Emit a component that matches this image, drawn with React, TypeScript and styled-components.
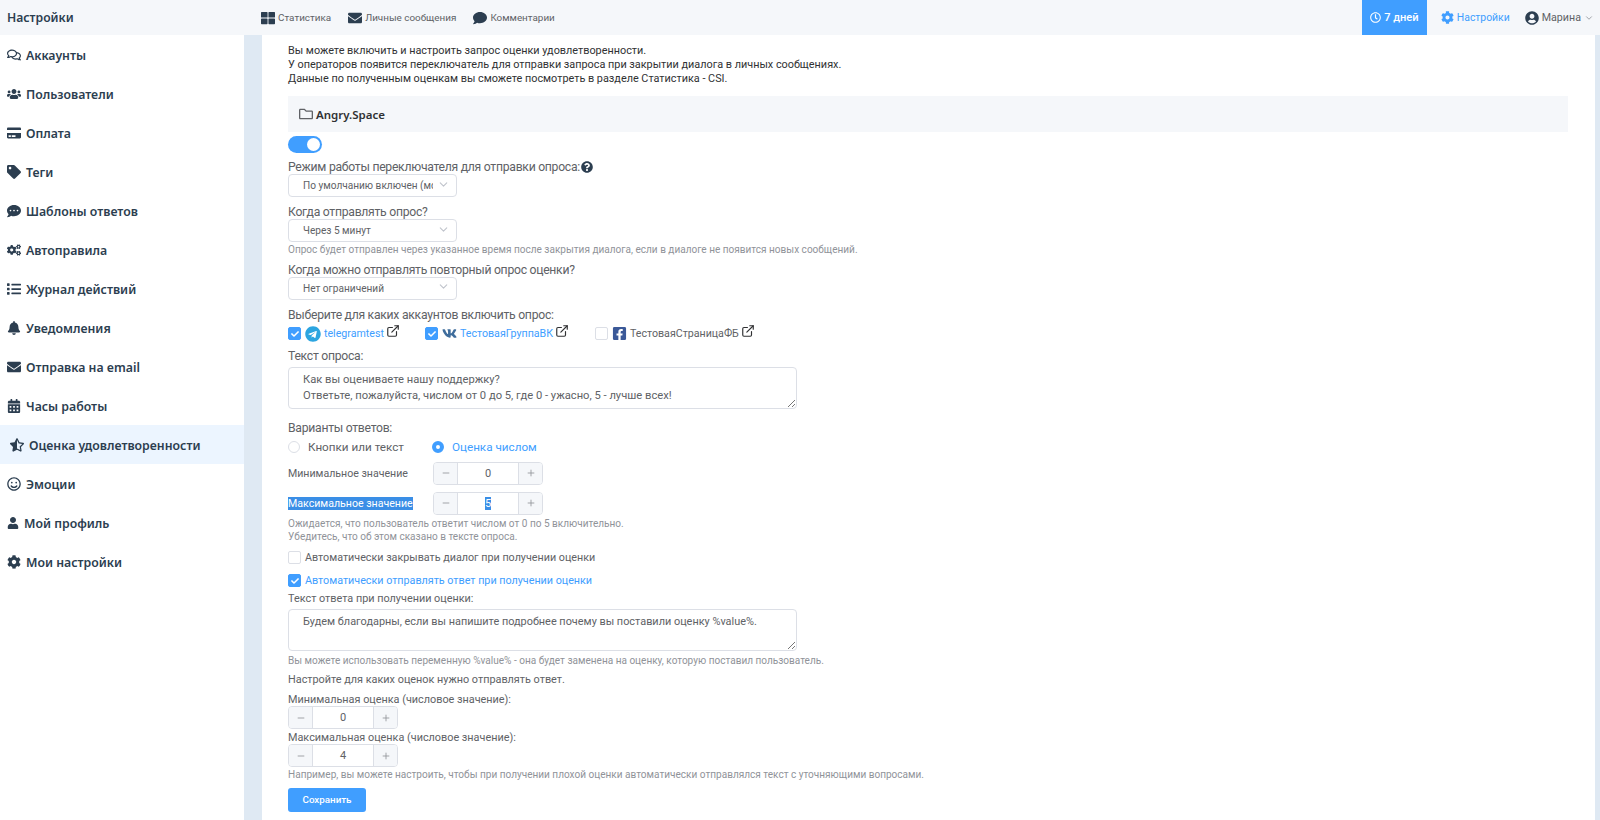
import React from "react";
import styled, { createGlobalStyle } from "styled-components";
import {
  FaRegComments, FaUsers, FaCreditCard, FaTag, FaCommentDots, FaCogs, FaList, FaBell, FaEnvelope,
  FaCalendarAlt, FaStarHalfAlt, FaRegSmile, FaUser, FaCog, FaThLarge, FaComment, FaRegClock,
  FaUserCircle, FaRegFolder, FaQuestionCircle, FaTelegram, FaVk, FaFacebookSquare, FaCheck,
} from "react-icons/fa";
import { FiChevronDown, FiExternalLink, FiMinus, FiPlus } from "react-icons/fi";

const GlobalStyle = createGlobalStyle`
  html, body { margin: 0; height: 100%; overflow: hidden; background: #fff; }
  body { font-family: Roboto, "Noto Sans", sans-serif; font-size: 12px; color: #606266; }
  *, *::before, *::after { box-sizing: border-box; }
`;

const BLUE = "#409eff";

const Page = styled.div`
  width: 1600px;
  height: 820px;
  display: flex;
  flex-direction: column;
  overflow: hidden;
`;

// верхняя панель
const TopBar = styled.header`
  height: 35px;
  flex: none;
  display: flex;
  background: #f5f7fa;
`;
const BrandTitle = styled.div`
  width: 244px;
  padding-left: 7px;
  font-family: "Noto Sans", sans-serif;
  font-size: 12.2px;
  font-weight: 600;
  line-height: 35px;
  color: #2c3e50;
`;
const TopNav = styled.nav`
  flex: 1;
  display: flex;
  align-items: center;
  padding-left: 17px;
  gap: 17px;
`;
const TopLink = styled.a`
  display: flex;
  align-items: center;
  gap: 3px;
  font-size: 9.9px;
  color: #606266;
  svg { width: auto; height: 14px; color: #2c3e50; }
`;
const TrialBadge = styled.div`
  width: 65px;
  background: ${BLUE};
  color: #fff;
  font-weight: 500;
  font-size: 11px;
  display: flex;
  align-items: center;
  justify-content: center;
  gap: 3px;
  svg { width: 11px; height: 11px; }
`;
const TopSettings = styled.a`
  margin-left: 14px;
  display: flex;
  align-items: center;
  gap: 3px;
  font-size: 10.4px;
  color: ${BLUE};
  svg { width: 13px; height: 13px; }
`;
const UserMenu = styled.div`
  margin: 0 6px 0 15px;
  display: flex;
  align-items: center;
  gap: 3px;
  font-size: 10.7px;
  color: #606266;
  svg { color: #2c3e50; width: 14px; height: 14px; }
  svg:last-child { color: #909399; width: 10px; height: 10px; margin-left: 0; }
`;

const Body = styled.div`
  flex: 1;
  display: flex;
  min-height: 0;
  background: #dfe9f3;
`;

// левое меню
const Sidebar = styled.aside`
  width: 244px;
  flex: none;
  background: #fff;
`;
const MenuItem = styled.a<{ $active?: boolean }>`
  height: 39px;
  padding-top: 1px;
  display: flex;
  align-items: center;
  gap: 5px;
  padding-left: ${(p) => (p.$active ? "10px" : "7px")};
  font-family: "Noto Sans", sans-serif;
  font-size: 12.3px;
  font-weight: 600;
  color: #2c3e50;
  background: ${(p) => (p.$active ? "#ecf5ff" : "transparent")};
  svg { width: auto; height: 14px; flex: none; }
`;
const ProfileIcon = styled(FaUser)`
  && { height: 12px; }
`;

// контент
const Main = styled.main`
  flex: 1;
  margin: 0 5px 0 18px;
  padding: 9px 27px 0 26px;
  background: #fff;
`;
const Intro = styled.p`
  margin: 0;
  font-size: 10.85px;
  line-height: 14px;
  color: #303133;
`;
const FolderBar = styled.div`
  height: 36px;
  margin-top: 10px;
  padding-left: 11px;
  background: #f5f7fa;
  display: flex;
  align-items: center;
  gap: 3px;
  font-family: "Noto Sans", sans-serif;
  font-weight: 600;
  font-size: 11.5px;
  color: #303133;
  svg { width: 14px; height: 14px; color: #606266; }
`;
const Toggle = styled.div`
  width: 34px;
  height: 17px;
  margin-top: 4px;
  padding: 2px;
  border-radius: 9px;
  background: ${BLUE};
  display: flex;
  justify-content: flex-end;
  &::after {
    content: "";
    width: 13px;
    height: 13px;
    border-radius: 50%;
    background: #fff;
  }
`;
const Label = styled.div<{ $top: number; $tight?: boolean }>`
  margin-top: ${(p) => p.$top}px;
  font-size: 12.2px;
  letter-spacing: -0.27px;
  line-height: ${(p) => (p.$tight ? 13 : 14)}px;
  color: #606266;
  display: flex;
  align-items: center;
  gap: 1px;
  svg { width: 12px; height: 12px; color: #2c3e50; }
`;
const SmallLabel = styled(Label)`
  font-size: 10.85px;
  letter-spacing: 0;
`;
const SelectBox = styled.div`
  width: 169px;
  height: 23px;
  padding: 0 6px 0 14px;
  border: 1px solid #dcdfe6;
  border-radius: 4px;
  display: flex;
  align-items: center;
  justify-content: space-between;
  font-size: 10.1px;
  color: #606266;
  svg { width: 13px; height: 13px; color: #c0c4cc; flex: none; margin-top: -3px; }
`;
const SelectText = styled.span`
  width: 130px;
  overflow: hidden;
  white-space: nowrap;
`;
const Hint = styled.div<{ $top: number }>`
  margin-top: ${(p) => p.$top}px;
  font-size: 10.05px;
  line-height: 13.5px;
  color: #909399;
`;
const AccountRow = styled.div`
  margin-top: 3px;
  height: 18px;
  display: flex;
  align-items: center;
`;
const Account = styled.div<{ $on?: boolean; $w: number }>`
  width: ${(p) => p.$w}px;
  display: flex;
  align-items: center;
  gap: 3px;
  font-size: 10.65px;
  color: ${(p) => (p.$on ? BLUE : "#606266")};
`;
const LinkIcon = styled(FiExternalLink)`
  width: 14px;
  height: 14px;
  margin: -5px 0 0 -1px;
  color: #303133;
`;
const Box = styled.span<{ $on?: boolean }>`
  width: 13px;
  height: 13px;
  flex: none;
  margin-right: 1px;
  border-radius: 2px;
  border: 1px solid ${(p) => (p.$on ? BLUE : "#dcdfe6")};
  background: ${(p) => (p.$on ? BLUE : "#fff")};
  display: inline-flex;
  align-items: center;
  justify-content: center;
  svg { width: 8px; height: 8px; color: #fff; }
`;
const TextArea = styled.div<{ $top: number; $h: number; $size: number }>`
  position: relative;
  width: 509px;
  height: ${(p) => p.$h}px;
  margin-top: ${(p) => p.$top}px;
  padding: 4px 14px;
  border: 1px solid #dcdfe6;
  border-radius: 4px;
  font-size: ${(p) => p.$size}px;
  line-height: 16px;
  color: #606266;
`;
const ResizeGrip = styled.svg`
  position: absolute;
  right: 1px;
  bottom: 1px;
  width: 8px;
  height: 8px;
`;
const RadioRow = styled.div`
  margin-top: 3px;
  height: 18px;
  display: flex;
  align-items: center;
`;
const Radio = styled.div<{ $on?: boolean }>`
  display: flex;
  align-items: center;
  gap: 8px;
  margin-right: 28px;
  font-size: 11.7px;
  color: ${(p) => (p.$on ? BLUE : "#606266")};
  &::before {
    content: "";
    width: 12px;
    height: 12px;
    border-radius: 50%;
    border: ${(p) => (p.$on ? `4px solid ${BLUE}` : "1px solid #dcdfe6")};
    background: #fff;
  }
`;
const NumberRow = styled.div<{ $top: number }>`
  margin-top: ${(p) => p.$top}px;
  display: flex;
  align-items: center;
`;
const NumberLabelWrap = styled.div`
  width: 145px;
  font-size: 10.6px;
  color: #606266;
`;
const Selected = styled.span`
  background: #3a8ee6;
  color: #fff;
`;
const Stepper = styled.div`
  width: 110px;
  height: 23px;
  display: flex;
  border: 1px solid #dcdfe6;
  border-radius: 4px;
  font-size: 11px;
  color: #606266;
`;
const StepButton = styled.div`
  width: 24px;
  flex: none;
  background: #f5f7fa;
  display: flex;
  align-items: center;
  justify-content: center;
  &:first-child { border-right: 1px solid #dcdfe6; border-radius: 3px 0 0 3px; }
  &:last-child { border-left: 1px solid #dcdfe6; border-radius: 0 3px 3px 0; }
  svg { width: 10px; height: 10px; color: #909399; }
`;
const StepValue = styled.div`
  flex: 1;
  text-align: center;
  line-height: 21px;
`;
const CheckRow = styled.div<{ $on?: boolean; $top: number }>`
  margin-top: ${(p) => p.$top}px;
  height: 18px;
  display: flex;
  align-items: center;
  gap: 3px;
  font-size: 10.75px;
  color: ${(p) => (p.$on ? BLUE : "#606266")};
`;
const SaveButton = styled.button`
  display: block;
  margin-top: 6px;
  width: 78px;
  height: 24px;
  border: 0;
  border-radius: 3px;
  background: ${BLUE};
  color: #fff;
  font: 500 9.8px Roboto, sans-serif;
`;

const menu = [
  { icon: <FaRegComments />, text: "Аккаунты" },
  { icon: <FaUsers />, text: "Пользователи" },
  { icon: <FaCreditCard />, text: "Оплата" },
  { icon: <FaTag />, text: "Теги" },
  { icon: <FaCommentDots />, text: "Шаблоны ответов" },
  { icon: <FaCogs />, text: "Автоправила" },
  { icon: <FaList />, text: "Журнал действий" },
  { icon: <FaBell />, text: "Уведомления" },
  { icon: <FaEnvelope />, text: "Отправка на email" },
  { icon: <FaCalendarAlt />, text: "Часы работы" },
  { icon: <FaStarHalfAlt />, text: "Оценка удовлетворенности", active: true },
  { icon: <FaRegSmile />, text: "Эмоции" },
  { icon: <ProfileIcon />, text: "Мой профиль" },
  { icon: <FaCog />, text: "Мои настройки" },
];

const Check = ({ on }: { on?: boolean }) => <Box $on={on}>{on && <FaCheck />}</Box>;

const Grip = () => (
  <ResizeGrip viewBox="0 0 8 8">
    <path d="M1 8 L8 1 M5 8 L8 5" stroke="#777" strokeWidth="1" />
  </ResizeGrip>
);

const NumberInput = ({ value, selected }: { value: string; selected?: boolean }) => (
  <Stepper>
    <StepButton><FiMinus /></StepButton>
    <StepValue>{selected ? <Selected>{value}</Selected> : value}</StepValue>
    <StepButton><FiPlus /></StepButton>
  </Stepper>
);

const App = () => {
  return (
    <Page>
      <GlobalStyle />
      <TopBar>
        <BrandTitle>Настройки</BrandTitle>
        <TopNav>
          <TopLink><FaThLarge />Статистика</TopLink>
          <TopLink><FaEnvelope />Личные сообщения</TopLink>
          <TopLink><FaComment />Комментарии</TopLink>
        </TopNav>
        <TrialBadge><FaRegClock />7 дней</TrialBadge>
        <TopSettings><FaCog />Настройки</TopSettings>
        <UserMenu><FaUserCircle />Марина<FiChevronDown /></UserMenu>
      </TopBar>

      <Body>
        <Sidebar>
          {menu.map((item) => (
            <MenuItem key={item.text} $active={item.active}>{item.icon}{item.text}</MenuItem>
          ))}
        </Sidebar>

        <Main>
          <Intro>
            Вы можете включить и настроить запрос оценки удовлетворенности.<br />
            У операторов появится переключатель для отправки запроса при закрытии диалога в личных сообщениях.<br />
            Данные по полученным оценкам вы сможете посмотреть в разделе Статистика - CSI.
          </Intro>
          <FolderBar><FaRegFolder />Angry.Space</FolderBar>
          <Toggle />

          <Label $top={7}>Режим работы переключателя для отправки опроса:<FaQuestionCircle /></Label>
          <SelectBox><SelectText>По умолчанию включен (мо</SelectText><FiChevronDown /></SelectBox>

          <Label $top={8}>Когда отправлять опрос?</Label>
          <SelectBox><SelectText>Через 5 минут</SelectText><FiChevronDown /></SelectBox>
          <Hint $top={1}>Опрос будет отправлен через указанное время после закрытия диалога, если в диалоге не появится новых сообщений.</Hint>

          <Label $top={6}>Когда можно отправлять повторный опрос оценки?</Label>
          <SelectBox><SelectText>Нет ограничений</SelectText><FiChevronDown /></SelectBox>

          <Label $top={8}>Выберите для каких аккаунтов включить опрос:</Label>
          <AccountRow>
            <Account $on $w={137}><Check on /><FaTelegram size={16} color="#2ca5e0" />telegramtest<LinkIcon /></Account>
            <Account $on $w={170}><Check on /><FaVk size={15} color="#3f6d9c" />ТестоваяГруппаВК<LinkIcon /></Account>
            <Account $w={200}><Check /><FaFacebookSquare size={15} color="#3b5998" />ТестоваяСтраницаФБ<LinkIcon /></Account>
          </AccountRow>

          <Label $top={6}>Текст опроса:</Label>
          <TextArea $top={4} $h={42} $size={11.2}>
            Как вы оцениваете нашу поддержку?<br />
            Ответьте, пожалуйста, числом от 0 до 5, где 0 - ужасно, 5 - лучше всех!
            <Grip />
          </TextArea>

          <Label $top={12}>Варианты ответов:</Label>
          <RadioRow>
            <Radio>Кнопки или текст</Radio>
            <Radio $on>Оценка числом</Radio>
          </RadioRow>

          <NumberRow $top={6}>
            <NumberLabelWrap>Минимальное значение</NumberLabelWrap>
            <NumberInput value="0" />
          </NumberRow>
          <NumberRow $top={7}>
            <NumberLabelWrap><Selected>Максимальное значение</Selected></NumberLabelWrap>
            <NumberInput value="5" selected />
          </NumberRow>
          <Hint $top={2}>
            Ожидается, что пользователь ответит числом от 0 по 5 включительно.<br />
            Убедитесь, что об этом сказано в тексте опроса.
          </Hint>

          <CheckRow $top={5}><Check />Автоматически закрывать диалог при получении оценки</CheckRow>
          <CheckRow $top={5} $on><Check on />Автоматически отправлять ответ при получении оценки</CheckRow>

          <SmallLabel $top={2}>Текст ответа при получении оценки:</SmallLabel>
          <TextArea $top={3} $h={42} $size={10.9}>
            Будем благодарны, если вы напишите подробнее почему вы поставили оценку %value%.
            <Grip />
          </TextArea>
          <Hint $top={3}>Вы можете использовать переменную %value% - она будет заменена на оценку, которую поставил пользователь.</Hint>
          <SmallLabel $top={6}>Настройте для каких оценок нужно отправлять ответ.</SmallLabel>

          <SmallLabel $top={6} $tight>Минимальная оценка (числовое значение):</SmallLabel>
          <NumberInput value="0" />
          <SmallLabel $top={2} $tight>Максимальная оценка (числовое значение):</SmallLabel>
          <NumberInput value="4" />
          <Hint $top={1}>Например, вы можете настроить, чтобы при получении плохой оценки автоматически отправлялся текст с уточняющими вопросами.</Hint>

          <SaveButton>Сохранить</SaveButton>
        </Main>
      </Body>
    </Page>
  );
};

export default App;
